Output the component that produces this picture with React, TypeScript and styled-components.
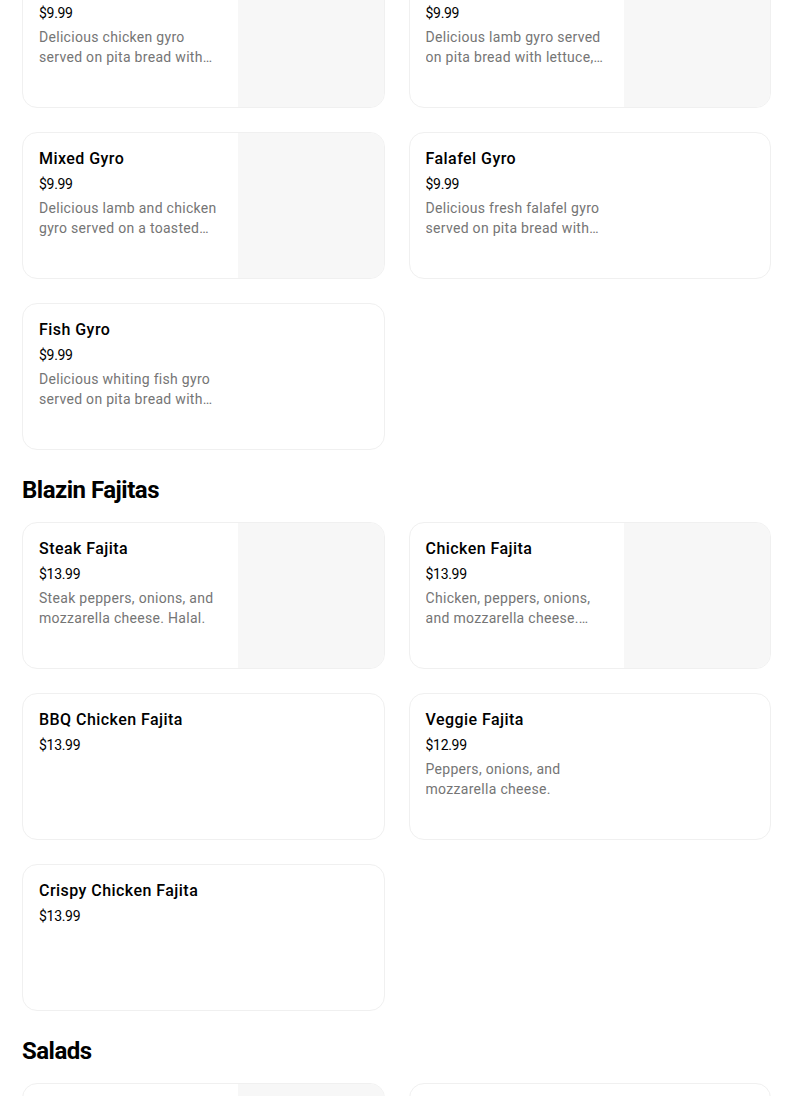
import React from "react";
import styled, { createGlobalStyle } from "styled-components";

const GlobalStyle = createGlobalStyle`
  * { box-sizing: border-box; }
  body {
    margin: 0;
    background: #ffffff;
    font-family: Roboto, "Liberation Sans", Arial, sans-serif;
    color: #000000;
  }
`;

type Item = {
  name: string;
  price: string;
  description?: string;
  hasImage?: boolean;
};

type Section = {
  title?: string;
  items: Item[];
};

const sections: Section[] = [
  {
    items: [
      {
        name: "Chicken Gyro",
        price: "$9.99",
        description: "Delicious chicken gyro served on pita bread with…",
        hasImage: true,
      },
      {
        name: "Lamb Gyro",
        price: "$9.99",
        description: "Delicious lamb gyro served on pita bread with lettuce,…",
        hasImage: true,
      },
      {
        name: "Mixed Gyro",
        price: "$9.99",
        description: "Delicious lamb and chicken gyro served on a toasted…",
        hasImage: true,
      },
      {
        name: "Falafel Gyro",
        price: "$9.99",
        description: "Delicious fresh falafel gyro served on pita bread with…",
      },
      {
        name: "Fish Gyro",
        price: "$9.99",
        description: "Delicious whiting fish gyro served on pita bread with…",
      },
    ],
  },
  {
    title: "Blazin Fajitas",
    items: [
      {
        name: "Steak Fajita",
        price: "$13.99",
        description: "Steak peppers, onions, and mozzarella cheese. Halal.",
        hasImage: true,
      },
      {
        name: "Chicken Fajita",
        price: "$13.99",
        description: "Chicken, peppers, onions, and mozzarella cheese.…",
        hasImage: true,
      },
      { name: "BBQ Chicken Fajita", price: "$13.99" },
      {
        name: "Veggie Fajita",
        price: "$12.99",
        description: "Peppers, onions, and mozzarella cheese.",
      },
      { name: "Crispy Chicken Fajita", price: "$13.99" },
    ],
  },
  {
    title: "Salads",
    items: [
      { name: "Greek Salad", price: "$9.99", hasImage: true },
      { name: "Garden Salad", price: "$8.99" },
    ],
  },
];

// page is shown scrolled part way down the menu
const Page = styled.main`
  width: 771px;
  padding-left: 22px;
  margin-top: -39px;
`;

const SectionTitle = styled.h2`
  margin: 24px 0 16px;
  font-size: 24px;
  line-height: 32px;
  font-weight: 700;
  letter-spacing: -0.5px;
`;

const Grid = styled.div`
  display: grid;
  grid-template-columns: 1fr 1fr;
  gap: 24px;
`;

const Card = styled.div`
  display: flex;
  height: 147px;
  border: 1px solid #f0f0f0;
  border-radius: 15px;
  overflow: hidden;
  background: #ffffff;
`;

const Info = styled.div`
  flex: 1;
  padding: 16px 16px 16px;
  min-width: 0;
`;

const Name = styled.div`
  font-size: 16px;
  line-height: 20px;
  font-weight: 500;
  letter-spacing: 0.45px;
  color: #000000;
`;

const Price = styled.div`
  margin-top: 5px;
  font-size: 14px;
  line-height: 20px;
  letter-spacing: -0.3px;
  color: #000000;
`;

const Description = styled.div`
  margin-top: 4px;
  font-size: 14px;
  line-height: 20px;
  letter-spacing: 0.3px;
  color: #757575;
  display: -webkit-box;
  -webkit-line-clamp: 2;
  -webkit-box-orient: vertical;
  overflow: hidden;
`;

const Photo = styled.div<{ $filled: boolean }>`
  width: 146px;
  flex-shrink: 0;
  background: ${({ $filled }) => ($filled ? "#f7f7f7" : "transparent")};
`;

const MenuCard: React.FC<{ item: Item }> = ({ item }) => (
  <Card>
    <Info>
      <Name>{item.name}</Name>
      <Price>{item.price}</Price>
      {item.description && <Description>{item.description}</Description>}
    </Info>
    <Photo $filled={!!item.hasImage} />
  </Card>
);

export default function App() {
  return (
    <>
      <GlobalStyle />
      <Page>
        {sections.map((section, i) => (
          <section key={i}>
            {section.title && <SectionTitle>{section.title}</SectionTitle>}
            <Grid>
              {section.items.map((item) => (
                <MenuCard key={item.name} item={item} />
              ))}
            </Grid>
          </section>
        ))}
      </Page>
    </>
  );
}
